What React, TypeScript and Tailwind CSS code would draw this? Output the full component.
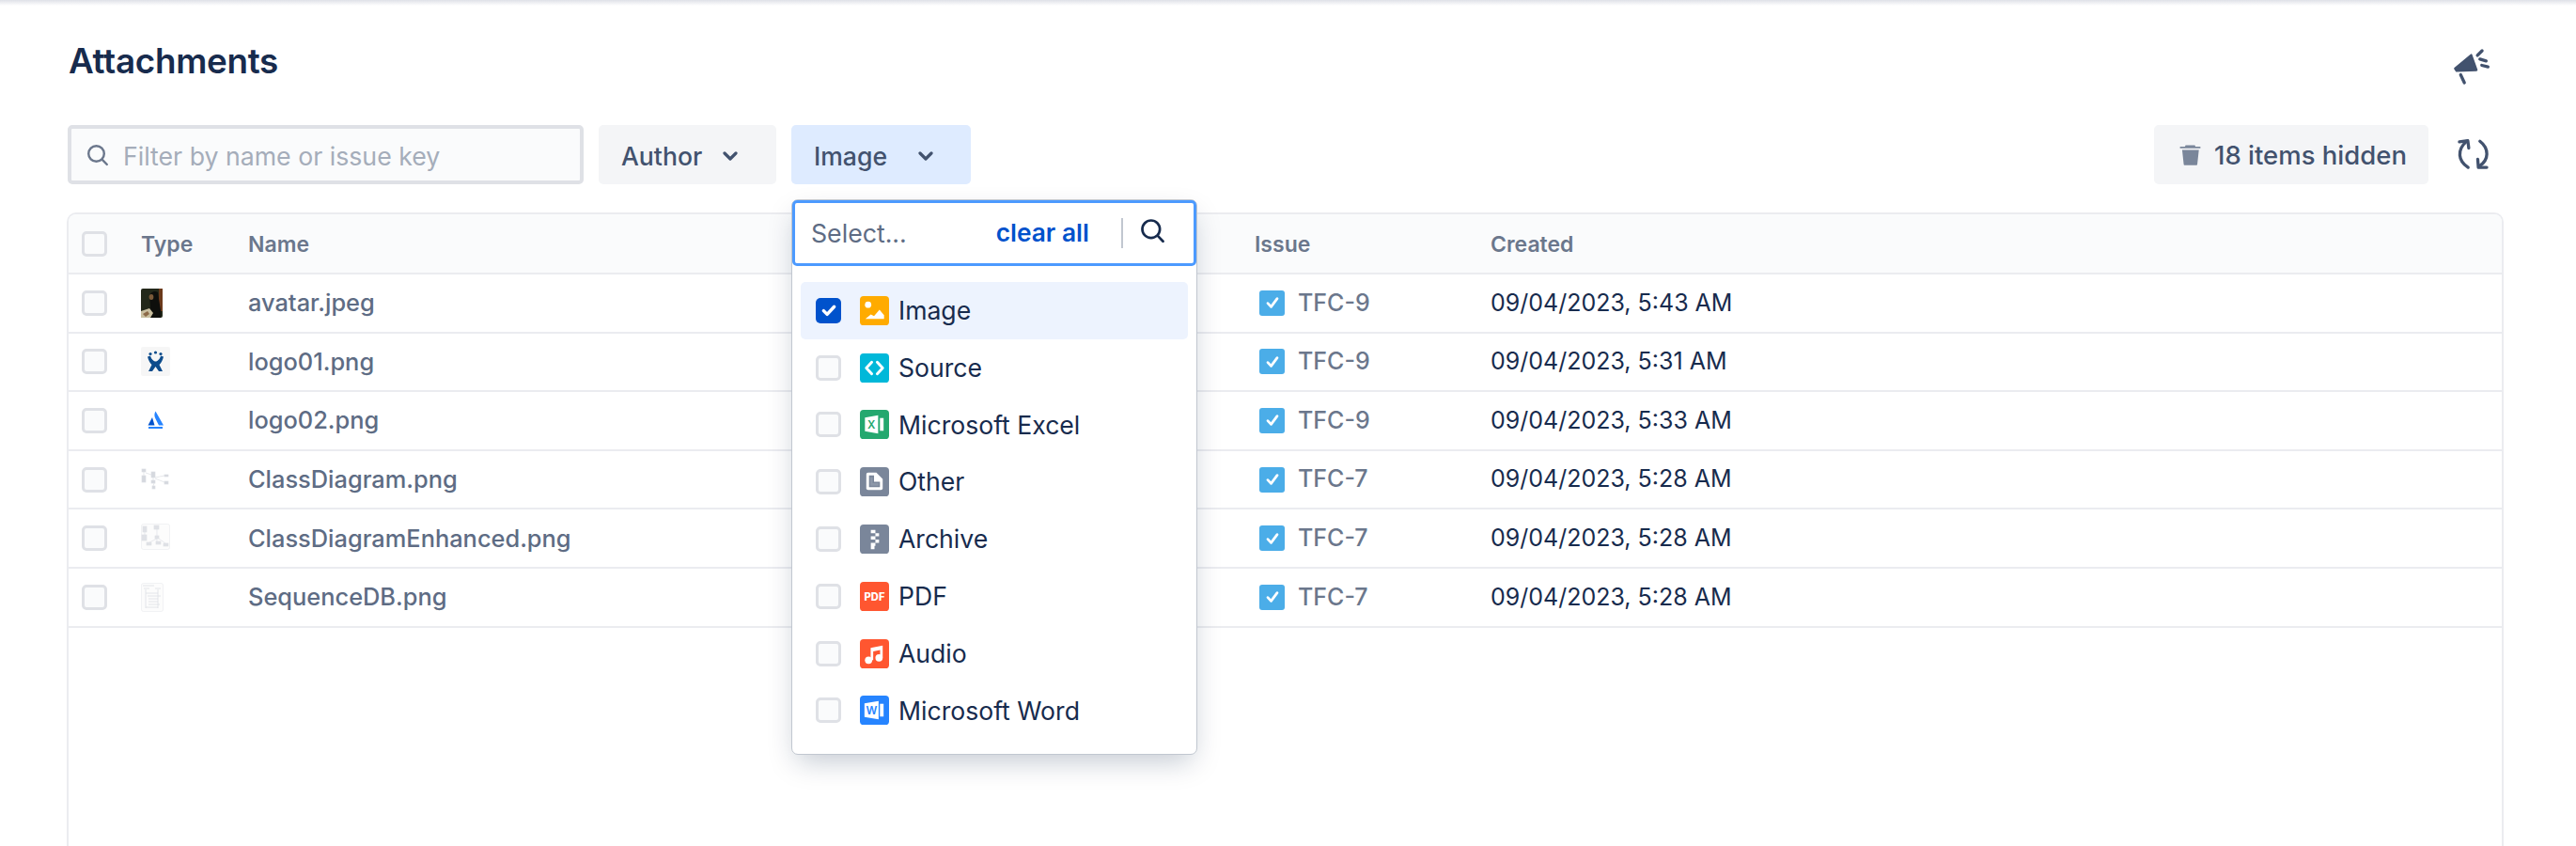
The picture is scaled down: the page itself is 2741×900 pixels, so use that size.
import { ReactNode } from "react";

interface Attachment {
  name: string;
  issue: string;
  created: string;
  thumb: ReactNode;
}

const rows: Attachment[] = [
  { name: "avatar.jpeg", issue: "TFC-9", created: "09/04/2023, 5:43 AM", thumb: <AvatarThumb /> },
  { name: "logo01.png", issue: "TFC-9", created: "09/04/2023, 5:31 AM", thumb: <Logo01Thumb /> },
  { name: "logo02.png", issue: "TFC-9", created: "09/04/2023, 5:33 AM", thumb: <Logo02Thumb /> },
  { name: "ClassDiagram.png", issue: "TFC-7", created: "09/04/2023, 5:28 AM", thumb: <ClassThumb /> },
  { name: "ClassDiagramEnhanced.png", issue: "TFC-7", created: "09/04/2023, 5:28 AM", thumb: <EnhancedThumb /> },
  { name: "SequenceDB.png", issue: "TFC-7", created: "09/04/2023, 5:28 AM", thumb: <SequenceThumb /> },
];

const fileTypes: { label: string; icon: ReactNode; checked?: boolean }[] = [
  { label: "Image", icon: <ImageTile />, checked: true },
  { label: "Source", icon: <SourceTile /> },
  { label: "Microsoft Excel", icon: <ExcelTile /> },
  { label: "Other", icon: <OtherTile /> },
  { label: "Archive", icon: <ArchiveTile /> },
  { label: "PDF", icon: <PdfTile /> },
  { label: "Audio", icon: <AudioTile /> },
  { label: "Microsoft Word", icon: <WordTile /> },
];

export default function App() {
  return (
    <div className="flex h-[900px] flex-col overflow-hidden bg-white font-['Inter',sans-serif] text-[#172b4d]">
      <div className="h-[6px] shrink-0 bg-gradient-to-b from-[#dfe1e8] to-white" />

      {/* Header */}
      <div className="flex h-[127px] shrink-0 items-start justify-between pl-[73px] pr-[90px]">
        <h1 className="mt-[37px] text-[36.8px] font-semibold leading-[44px] tracking-[-0.3px]">Attachments</h1>
        <div className="mt-[44px]">
          <MegaphoneIcon />
        </div>
      </div>

      {/* Toolbar */}
      <div className="flex h-[63px] shrink-0 items-stretch pl-[72px] pr-[91px]">
        <div className="flex w-[549px] items-center rounded-[5px] border-[4px] border-[#dfe1e6] bg-[#fafbfc] pl-[16px]">
          <SearchIcon className="h-[24px] w-[24px] text-[#6b778c]" />
          <span className="ml-[15px] pt-[4px] text-[26.7px] text-[#a5adba]">Filter by name or issue key</span>
        </div>
        <button className="ml-[16px] flex w-[189px] items-center rounded-[5px] bg-[#f4f5f7] pl-[24px] text-[26.6px] font-medium text-[#42526e]">
          <span className="pt-[4px]">Author</span>
          <ChevronIcon className="ml-[22px] mt-[2px]" />
        </button>
        <div className="relative ml-[16px]">
          <button className="flex h-full w-[191px] items-center rounded-[5px] bg-[#deebff] pl-[24px] text-[26.6px] font-medium text-[#42526e]">
            <span className="pt-[4px]">Image</span>
            <ChevronIcon className="ml-[33px] mt-[2px]" />
          </button>
          <TypeMenu />
        </div>
        <button className="ml-auto flex w-[292px] items-center rounded-[5px] bg-[#f4f5f7] pl-[26px] text-[27.5px] font-medium text-[#42526e]">
          <TrashIcon />
          <span className="ml-[13px] pt-[3px]">18 items hidden</span>
        </button>
        <div className="ml-[28px] flex items-center">
          <RefreshIcon />
        </div>
      </div>

      {/* Table */}
      <div className="mx-[71px] mr-[77px] mt-[30px] flex-1 rounded-t-[10px] border-x-2 border-t-2 border-[#ebecf0]">
        <div className="grid h-[64px] grid-cols-[77px_114px_1071px_251px_1fr] items-center rounded-t-[8px] border-b-2 border-[#ebecf0] bg-[#fafbfc] text-[23px] font-semibold text-[#6b778c]">
          <div className="pl-[14px]">
            <Checkbox />
          </div>
          <div className="pt-[2px]">Type</div>
          <div className="pt-[2px]">Name</div>
          <div className="pt-[2px]">Issue</div>
          <div className="pt-[2px]">Created</div>
        </div>
        {rows.map((row) => (
          <div
            key={row.name}
            className="grid h-[62.6px] grid-cols-[77px_114px_1071px_251px_1fr] items-center border-b-2 border-[#ebecf0]"
          >
            <div className="pl-[14px]">
              <Checkbox />
            </div>
            <div className="flex items-center">{row.thumb}</div>
            <div className="text-[25.4px] font-medium text-[#5e6c84]">{row.name}</div>
            <div className="flex items-center pl-[5px]">
              <IssueIcon />
              <span className="ml-[14px] text-[25px] font-medium text-[#6b778c]">{row.issue}</span>
            </div>
            <div className="text-[25px]">{row.created}</div>
          </div>
        ))}
      </div>
    </div>
  );
}

function TypeMenu() {
  return (
    <div className="absolute left-0 top-[79px] z-10 h-[591px] w-[432px] rounded-[7px] border border-[#c1c7d0] bg-white shadow-[0_12px_30px_-6px_rgba(9,30,66,0.25)]">
      <div className="flex h-[70px] items-center rounded-[5px] border-[3.5px] border-[#4c9aff] bg-white pl-[17px]">
        <span className="text-[26.7px] text-[#5e6c84]">Select...</span>
        <span className="ml-[95px] text-[26.3px] font-semibold text-[#0052cc]">clear all</span>
        <span className="ml-[34px] h-[32px] w-[2px] bg-[#c1c7d0]" />
        <SearchIcon className="mb-[5px] ml-[18px] h-[27px] w-[27px] text-[#172b4d]" />
      </div>
      <div className="mt-[17px]">
        {fileTypes.map((type) => (
          <div
            key={type.label}
            className={`mx-[9px] flex h-[60.8px] items-center rounded-[5px] pl-[16px] ${type.checked ? "bg-[#edf3fe]" : ""}`}
          >
            <Checkbox checked={type.checked} />
            <span className="ml-[20px] shrink-0">{type.icon}</span>
            <span className="ml-[10px] pt-[1px] text-[26.6px]">{type.label}</span>
          </div>
        ))}
      </div>
    </div>
  );
}

function Checkbox({ checked }: { checked?: boolean }) {
  if (checked) {
    return (
      <span className="flex h-[27px] w-[27px] shrink-0 items-center justify-center rounded-[5px] bg-[#0052cc]">
        <svg viewBox="0 0 16 16" className="h-[20px] w-[20px]">
          <path d="M3.5 8.5l3 3 6-6.500" fill="none" stroke="#fff" strokeWidth="2.800" strokeLinecap="round" strokeLinejoin="round" />
        </svg>
      </span>
    );
  }
  return <span className="block h-[27px] w-[27px] shrink-0 rounded-[5px] border-[3.5px] border-[#dfe1e6] bg-[#fafbfc]" />;
}

function IssueIcon() {
  return (
    <span className="flex h-[27px] w-[27px] shrink-0 items-center justify-center rounded-[3px] bg-[#4bade8]">
      <svg viewBox="0 0 16 16" className="h-[20px] w-[20px]">
        <path d="M4 8.500l2.800 3L12 4.500" fill="none" stroke="#fff" strokeWidth="2.200" strokeLinecap="round" strokeLinejoin="round" />
      </svg>
    </span>
  );
}

function SearchIcon({ className }: { className: string }) {
  return (
    <svg viewBox="0 0 24 24" className={`shrink-0 ${className}`} fill="none" stroke="currentColor" strokeWidth="2.400" strokeLinecap="round">
      <circle cx="10.500" cy="10.500" r="8.300" />
      <path d="M16.800 16.800l5 5.200" />
    </svg>
  );
}

function ChevronIcon({ className }: { className: string }) {
  return (
    <svg viewBox="0 0 16 10" className={`h-[10px] w-[16px] shrink-0 ${className}`} fill="none" stroke="#42526e" strokeWidth="3.200" strokeLinecap="round" strokeLinejoin="round">
      <path d="M2 2l6 6 6-6" />
    </svg>
  );
}

function MegaphoneIcon() {
  return (
    <svg viewBox="1105 90 130 125" className="h-[42px] w-[43px]" fill="#42526e" stroke="#42526e" strokeLinecap="round" strokeLinejoin="round">
      <path d="M1118 158L1170 115L1187 163L1123 166Z" strokeWidth="7" />
      <path d="M1136 178L1148 204M1190 116L1205 101M1198 128L1218 134M1204 148L1224 153" strokeWidth="10" fill="none" />
    </svg>
  );
}

function TrashIcon() {
  return (
    <svg viewBox="235 398 76 72" className="h-[24px] w-[25px] shrink-0" fill="#7a869a">
      <path d="M258 402h30l2 5h16v5h-66v-5h16z" />
      <path d="M247 417h54l-5 47q0 3-3 3h-38q-3 0-3-3z" />
    </svg>
  );
}

function RefreshIcon() {
  return (
    <svg viewBox="1115 380 115 110" className="h-[37px] w-[38px]" fill="none" stroke="#42526e" strokeWidth="10" strokeLinecap="round" strokeLinejoin="round">
      <path d="M1158 476C1125 455 1122 420 1152 393" />
      <path d="M1130 394L1157 390L1160 414" />
      <path d="M1196 392C1226 415 1226 452 1194 472" />
      <path d="M1189 450L1191 476L1218 476" />
    </svg>
  );
}

function Tile({ bg, children }: { bg: string; children: ReactNode }) {
  return (
    <svg viewBox="0 0 32 32" className="block h-[31px] w-[31px]">
      <rect width="32" height="32" rx="4" fill={bg} />
      {children}
    </svg>
  );
}

function ImageTile() {
  return (
    <Tile bg="#ffab00">
      <circle cx="9" cy="9.500" r="3.500" fill="#fff" />
      <path d="M6 25l6-5 3.500 2 6-7 5 6v4z" fill="#fff" />
    </Tile>
  );
}

function SourceTile() {
  return (
    <Tile bg="#00b8d9">
      <path d="M13 9.500L7 16l6 6.500M19 9.500l6 6.500-6 6.500" fill="none" stroke="#fff" strokeWidth="3" strokeLinecap="round" strokeLinejoin="round" />
    </Tile>
  );
}

function ExcelTile() {
  return (
    <Tile bg="#24a86f">
      <path d="M5.500 8.500L20 6v20L5.500 23.500z" fill="#fff" />
      <rect x="22" y="9" width="4" height="14" fill="#fff" />
      <text x="12.500" y="20.500" fontSize="12" fontWeight="600" textAnchor="middle" fill="#24a86f" fontFamily="Inter, sans-serif">X</text>
    </Tile>
  );
}

function OtherTile() {
  return (
    <Tile bg="#7a869a">
      <path d="M7 8a2 2 0 0 1 2-2h9l7 7v10a2 2 0 0 1-2 2H9a2 2 0 0 1-2-2z" fill="#fff" />
      <path d="M10 9h5.500v7H22v6H10z" fill="#7a869a" />
      <path d="M11.500 11h2.500v6.500h6.500v3h-9z" fill="#fff" opacity="0.15" />
    </Tile>
  );
}

function ArchiveTile() {
  return (
    <Tile bg="#7a869a">
      <path d="M12 6h5v3.500h-5zM17 9.500h4V13h-4zM12 13h5v3.500h-5zM17 16.500h4V20h-4zM12 20h5v3.500h-5zM12 23.500h4V27h-4z" fill="#fff" />
    </Tile>
  );
}

function PdfTile() {
  return (
    <Tile bg="#ff5630">
      <text x="16" y="20.500" fontSize="11.500" fontWeight="800" textAnchor="middle" fill="#fff" fontFamily="Inter, sans-serif">PDF</text>
    </Tile>
  );
}

function AudioTile() {
  return (
    <Tile bg="#ff5630">
      <circle cx="9.500" cy="23" r="4" fill="#fff" />
      <circle cx="21" cy="20.500" r="4" fill="#fff" />
      <path d="M11.800 23V9.500L25 7v13.500h-2.800V11.800l-7.600 1.500V23z" fill="#fff" />
    </Tile>
  );
}

function WordTile() {
  return (
    <Tile bg="#2684ff">
      <path d="M5 8.500L20.500 6v20L5 23.500z" fill="#fff" />
      <rect x="22" y="9" width="4" height="14" fill="#fff" />
      <text x="12.800" y="20.500" fontSize="12" fontWeight="600" textAnchor="middle" fill="#2684ff" fontFamily="Inter, sans-serif">W</text>
    </Tile>
  );
}

function AvatarThumb() {
  return (
    <svg viewBox="0 0 23 31" className="h-[31px] w-[23px]">
      <rect width="23" height="31" rx="2" fill="#23281a" />
      <rect x="19" width="4" height="24" fill="#6b3a1c" />
      <path d="M9 7q4-6 9-3l1 7 2 12v8H8l2-12z" fill="#0e0f0c" />
      <ellipse cx="11" cy="9" rx="2.400" ry="3" fill="#7a5a3a" />
      <path d="M0 24l9-3 4 5-3 5H0z" fill="#c9bfa0" />
      <path d="M2 27l5-3 2 3-4 3z" fill="#8c6a48" />
    </svg>
  );
}

function Logo01Thumb() {
  return (
    <svg viewBox="0 0 31 31" className="h-[31px] w-[31px]">
      <rect width="31" height="31" rx="2" fill="#f6f6f6" />
      <circle cx="10" cy="7.500" r="1.600" fill="#0d4c8c" />
      <circle cx="15.500" cy="6" r="1.600" fill="#0d4c8c" />
      <circle cx="21" cy="7.500" r="1.600" fill="#0d4c8c" />
      <path d="M7 10.500l3 -1c1 4 4 6 5.500 6s4.500-2 5.500-6l3 1c-1 4-2.500 6.500-4.500 8.500l3.500 7h-4l-3.500-5-3.500 5h-4l3.500-7c-2-2-3.500-4.500-4.500-8.500z" fill="#0d4c8c" />
    </svg>
  );
}

function Logo02Thumb() {
  return (
    <svg viewBox="0 0 31 31" className="h-[31px] w-[31px]">
      <path d="M15.500 5.500c-1.500 2.500-1.500 5.500 0 8l3.500 7h5z" fill="#2684ff" />
      <path d="M12 12l-4.500 8.500h7z" fill="#0052cc" />
      <rect x="8" y="22" width="15" height="2" fill="#2684ff" />
    </svg>
  );
}

function ClassThumb() {
  return (
    <svg viewBox="0 0 31 31" className="h-[31px] w-[31px]" fill="#d5d8de" stroke="#dcdfe4" strokeWidth="0.700">
      <rect x="1" y="4" width="4" height="3" />
      <rect x="1" y="11" width="4" height="7" />
      <rect x="11" y="7" width="4" height="6" />
      <rect x="11" y="16" width="4" height="3" />
      <rect x="12" y="22" width="3" height="3" />
      <rect x="25" y="10" width="4" height="2" />
      <rect x="25" y="17" width="4" height="3" />
      <path d="M3 7l0 4M5 8l6 2M13 13v3M14 19l-1 3M15 13l10-2M15 14l10 4" fill="none" />
    </svg>
  );
}

function EnhancedThumb() {
  return (
    <svg viewBox="0 0 31 31" className="h-[31px] w-[31px]" fill="#dfe1e6" stroke="#dfe1e6" strokeWidth="0.700">
      <rect x="0.500" y="0.500" width="30" height="27" rx="2" fill="#fcfcfc" strokeWidth="0.400" />
      <rect x="2" y="3" width="4" height="6" />
      <rect x="14" y="2" width="5" height="4" />
      <rect x="1" y="12" width="5" height="6" />
      <rect x="15" y="13" width="4" height="3" />
      <rect x="6" y="20" width="5" height="3" />
      <rect x="16" y="19" width="5" height="3" />
      <rect x="24" y="21" width="5" height="3" />
      <path d="M4 9v3M17 6v7M17 16l-8 4M17 16v3M19 16l7 5" fill="none" />
    </svg>
  );
}

function SequenceThumb() {
  return (
    <svg viewBox="0 0 24 31" className="h-[31px] w-[24px]" fill="none" stroke="#dde0e5" strokeWidth="0.800">
      <rect x="0.500" y="0.500" width="23" height="30" rx="2" fill="#fcfcfc" strokeWidth="0.400" />
      <path d="M2 3h12M3 6h6M15 6h6M5 7v20M18 7v20M5 11h13M7 14h14M8 17h10M8 20h10M8 23h12M5 26h13" />
    </svg>
  );
}
